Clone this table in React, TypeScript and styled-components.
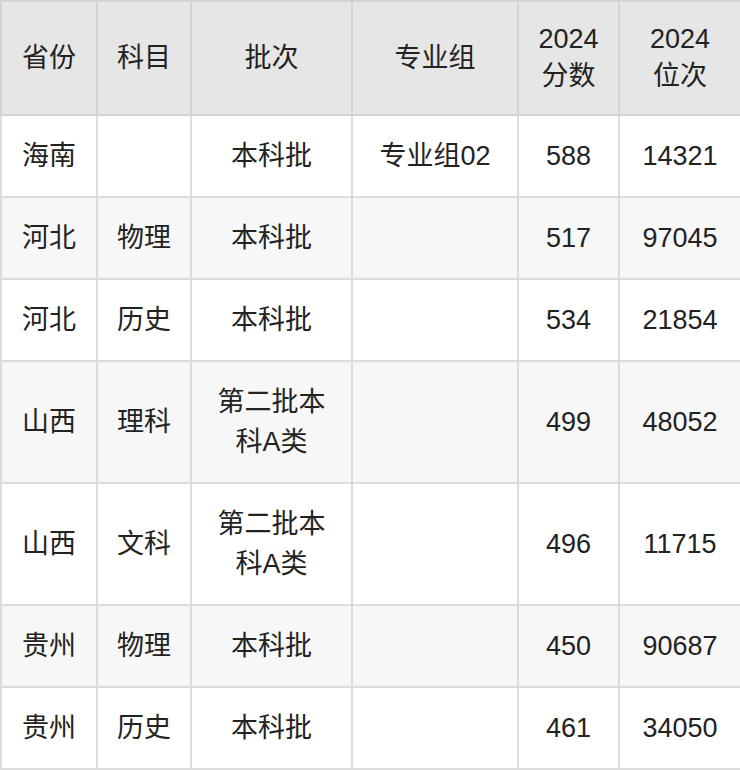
import React from "react";
import styled, { createGlobalStyle } from "styled-components";

const GlobalStyle = createGlobalStyle`
  body {
    margin: 0;
    background: #fff;
    font-family: "Liberation Sans", "Noto Sans CJK SC", sans-serif;
  }
`;

type Row = {
  province: string;
  subject: string;
  batch: string;
  group: string;
  score: string;
  rank: string;
};

const rows: Row[] = [
  { province: "海南", subject: "", batch: "本科批", group: "专业组02", score: "588", rank: "14321" },
  { province: "河北", subject: "物理", batch: "本科批", group: "", score: "517", rank: "97045" },
  { province: "河北", subject: "历史", batch: "本科批", group: "", score: "534", rank: "21854" },
  { province: "山西", subject: "理科", batch: "第二批本科A类", group: "", score: "499", rank: "48052" },
  { province: "山西", subject: "文科", batch: "第二批本科A类", group: "", score: "496", rank: "11715" },
  { province: "贵州", subject: "物理", batch: "本科批", group: "", score: "450", rank: "90687" },
  { province: "贵州", subject: "历史", batch: "本科批", group: "", score: "461", rank: "34050" },
];

const widths = [96, 94, 161, 166, 101, 122];

function App() {
  return (
    <>
      <GlobalStyle />
      <Table>
        <colgroup>
          {widths.map((w, i) => (
            <col key={i} style={{ width: w }} />
          ))}
        </colgroup>
        <thead>
          <tr>
            <Th>省份</Th>
            <Th>科目</Th>
            <Th>批次</Th>
            <Th>专业组</Th>
            <Th>
              2024
              <br />
              分数
            </Th>
            <Th>
              2024
              <br />
              位次
            </Th>
          </tr>
        </thead>
        <tbody>
          {rows.map((r, i) => (
            <Tr key={i} $striped={i % 2 === 1}>
              <Td>{r.province}</Td>
              <Td>{r.subject}</Td>
              <Td>{r.batch}</Td>
              <Td>{r.group}</Td>
              <Td>{r.score}</Td>
              <Td>{r.rank}</Td>
            </Tr>
          ))}
        </tbody>
      </Table>
    </>
  );
}

const Table = styled.table`
  width: 740px;
  table-layout: fixed;
  border-collapse: collapse;
  color: #222;
  font-size: 27px;
`;

const Th = styled.th`
  background: #e6e6e6;
  border: 2px solid #d3d3d3;
  font-weight: normal;
  line-height: 37px;
  padding: 19px 16px;
  text-align: center;
  vertical-align: middle;
`;

const Tr = styled.tr<{ $striped: boolean }>`
  background: ${(p) => (p.$striped ? "#f7f7f7" : "#ffffff")};
`;

const Td = styled.td`
  border: 2px solid #dcdcdc;
  line-height: 40px;
  padding: 20px 16px;
  text-align: center;
  vertical-align: middle;
  word-break: break-all;
`;

export default App;
